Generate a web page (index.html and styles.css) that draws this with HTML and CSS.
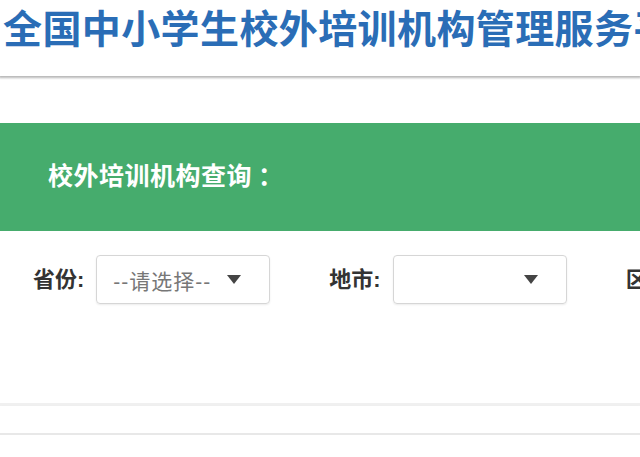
FILE: index.html
```html
<!DOCTYPE html>
<html lang="zh-CN">
<head>
	<meta charset="UTF-8">
	<title>全国中小学生校外培训机构管理服务平台</title>
	<link rel="stylesheet" href="styles.css">
</head>
<body>
	<div class="header">
		<h1 class="site-title">全国中小学生校外培训机构管理服务平台</h1>
	</div>
	<div class="main">
		<div class="query-panel">
			<div class="panel-head">校外培训机构查询<span class="colon">：</span></div>
			<form class="filter">
				<label class="field">
					<span class="field-name">省份:</span>
					<span class="picker"><span class="picker-text">--请选择--</span><i class="arrow"></i></span>
				</label>
				<label class="field">
					<span class="field-name">地市:</span>
					<span class="picker"><span class="picker-text"></span><i class="arrow"></i></span>
				</label>
				<label class="field">
					<span class="field-name">区县:</span>
					<span class="picker"><span class="picker-text"></span><i class="arrow"></i></span>
				</label>
			</form>
		</div>
		<div class="next-bar"></div>
	</div>
</body>
</html>
```

FILE: styles.css
```css
body {
	margin: 0;
	width: 640px;
	overflow: hidden;
	background: #fff;
	font-family: "Liberation Sans", "Noto Sans CJK SC", sans-serif;
	color: #333;
}

/*顶部标题*/
.header {
	height: 76px;
	box-shadow: 0 1px 2px 1px rgba(0, 0, 0, .28);
	overflow: hidden;
}
.site-title {
	margin: 0;
	padding: 2px 0 0 3px;
	font-size: 39px;
	letter-spacing: .4px;
	line-height: 56px;
	font-weight: bold;
	color: #2a6db6;
	white-space: nowrap;
}

/*查询区域*/
.main {
	margin-top: 47px;
}
.query-panel {
	border-bottom: 3px solid #f0f0f0;
}
.panel-head {
	height: 108px;
	padding-left: 48px;
	line-height: 106px;
	font-size: 25px;
	letter-spacing: .5px;
	font-weight: bold;
	color: #fff;
	background-color: #46ac6d;
}
.colon {
	margin-left: 6px;
}
.filter {
	display: flex;
	height: 148px;
	padding: 24px 0 0 33px;
	white-space: nowrap;
}
.field {
	display: flex;
	align-items: flex-start;
	margin-right: 59px;
	flex-shrink: 0;
}
.field-name {
	font-size: 22px;
	font-weight: bold;
	line-height: 49px;
	margin-right: 12px;
}
.picker {
	display: flex;
	align-items: center;
	box-sizing: border-box;
	width: 174px;
	height: 49px;
	padding: 0 0 0 16px;
	border: 1px solid #d6d6d6;
	border-radius: 4px;
	box-shadow: 0 1px 2px rgba(0, 0, 0, .08);
}
.picker-text {
	width: 114px;
	font-size: 21px;
	letter-spacing: 1px;
	color: #777;
}
.arrow {
	width: 0;
	height: 0;
	border-left: 7px solid transparent;
	border-right: 7px solid transparent;
	border-top: 9px solid #444;
}

.next-bar {
	height: 27px;
	border-bottom: 2px solid #e8e8e8;
	box-shadow: 0 2px 3px rgba(0, 0, 0, .08);
}
```
